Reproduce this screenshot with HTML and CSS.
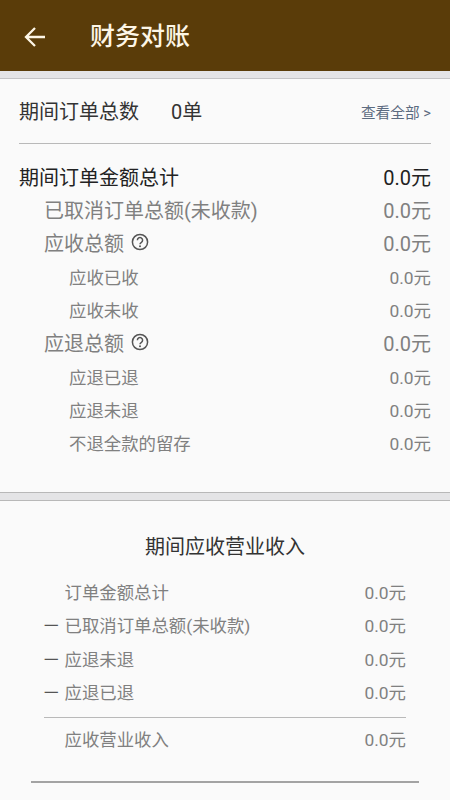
FILE: index.html
```html
<!DOCTYPE html>
<html lang="zh-CN">
<head>
<meta charset="utf-8">
<title>财务对账</title>
<link rel="stylesheet" href="styles.css">
</head>
<body>
<header class="appbar">
  <svg class="back" viewBox="0 0 24 24" width="24" height="24"><path d="M22 12H3.5M12 3 3 12l9 9" fill="none" stroke="currentColor" stroke-width="2.3"/></svg>
  <h1 class="title">财务对账</h1>
</header>
<main class="panel first">
  <div class="count-row">
    <span class="count-label">期间订单总数</span>
    <span class="count-value">0单</span>
    <span class="view-all">查看全部 &gt;</span>
  </div>
  <div class="rule"></div>
  <div class="list">
    <div class="row lv0"><span>期间订单金额总计</span><span>0.0元</span></div>
    <div class="row lv1"><span>已取消订单总额(未收款)</span><span>0.0元</span></div>
    <div class="row lv1"><span class="with-help">应收总额<svg class="help" viewBox="0 0 18 18" width="18" height="18"><circle cx="9" cy="9" r="7.6" fill="none" stroke="currentColor" stroke-width="1.5"/><path d="M6.4 7.2a2.6 2.6 0 1 1 4 2.1c-1 .6-1.4 1-1.4 2" fill="none" stroke="currentColor" stroke-width="1.5"/><circle cx="9" cy="13.3" r="1" fill="currentColor"/></svg></span><span>0.0元</span></div>
    <div class="row lv2"><span>应收已收</span><span>0.0元</span></div>
    <div class="row lv2"><span>应收未收</span><span>0.0元</span></div>
    <div class="row lv1"><span class="with-help">应退总额<svg class="help" viewBox="0 0 18 18" width="18" height="18"><circle cx="9" cy="9" r="7.6" fill="none" stroke="currentColor" stroke-width="1.5"/><path d="M6.4 7.2a2.6 2.6 0 1 1 4 2.1c-1 .6-1.4 1-1.4 2" fill="none" stroke="currentColor" stroke-width="1.5"/><circle cx="9" cy="13.3" r="1" fill="currentColor"/></svg></span><span>0.0元</span></div>
    <div class="row lv2"><span>应退已退</span><span>0.0元</span></div>
    <div class="row lv2"><span>应退未退</span><span>0.0元</span></div>
    <div class="row lv2"><span>不退全款的留存</span><span>0.0元</span></div>
  </div>
</main>
<section class="panel second">
  <h2 class="sub-title">期间应收营业收入</h2>
  <div class="calc">
    <div class="calc-row"><span class="sign"></span><span class="calc-name">订单金额总计</span><span>0.0元</span></div>
    <div class="calc-row"><span class="sign">一</span><span class="calc-name">已取消订单总额(未收款)</span><span>0.0元</span></div>
    <div class="calc-row"><span class="sign">一</span><span class="calc-name">应退未退</span><span>0.0元</span></div>
    <div class="calc-row"><span class="sign">一</span><span class="calc-name">应退已退</span><span>0.0元</span></div>
    <div class="calc-rule"></div>
    <div class="calc-row"><span class="sign"></span><span class="calc-name">应收营业收入</span><span>0.0元</span></div>
  </div>
  <div class="end-rule"></div>
</section>
</body>
</html>
```

FILE: styles.css
```css
* { box-sizing: border-box; margin: 0; padding: 0; }
html, body { height: 800px; overflow: hidden; }
body {
  background: #e4e4e6;
  font-family: Roboto, "Noto Sans CJK SC", sans-serif;
  color: #333;
}
.appbar {
  height: 71px;
  background: #5a3c09;
  color: #fdf6e6;
  display: flex;
  align-items: center;
  padding: 2px 0 0 23px;
}
.back { display: block; }
.title { font-size: 25px; font-weight: 500; margin-left: 43px; line-height: 1; color: #fdf6e6; }
.panel { background: #fafafa; }
.first {
  margin-top: 7px;
  border-top: 1px solid #c4c4c6;
  height: 415px;
  padding: 0 19px;
  border-bottom: 1px solid #b8b8b8;
}
.count-row {
  height: 64px;
  padding-bottom: 1px;
  display: flex;
  align-items: center;
  font-size: 20px;
  color: #333;
}
.count-value { margin-left: 32px; }
.view-all { margin-left: auto; font-size: 14.7px; color: #5c6b80; padding-top: 2px; }
.rule { height: 1px; background: #b9b9b9; }
.list { padding-top: 15.5px; }
.row {
  height: 33.33px;
  display: flex;
  align-items: center;
  justify-content: space-between;
  color: #808080;
}
.lv0 { font-size: 20px; color: #222; }
.lv1 { font-size: 20px; padding-left: 25px; }
.lv2 { font-size: 17.4px; padding-left: 50px; }
.with-help { display: flex; align-items: center; }
.help { margin-left: 7px; color: #555; margin-top: -2px; }
.second {
  margin-top: 7px;
  border-top: 1px solid #b8b8b8;
  padding: 0 31px;
  height: 300px;
}
.sub-title { font-size: 20px; font-weight: 400; text-align: center; color: #333; padding-top: 32px; line-height: 28px; }
.calc { padding: 14px 13px 0; }
.calc-row {
  height: 33.33px;
  display: flex;
  align-items: center;
  font-size: 17.4px;
  color: #808080;
}
.sign { width: 21px; flex: none; font-size: 14.5px; color: #555; }
.calc-name { flex: 1; margin-left: -0.5px; }
.calc-rule { height: 1px; background: #b9b9b9; margin: 9px 0 4px; }
.end-rule { height: 2px; background: #a3a3a3; margin-top: 25px; }
```
